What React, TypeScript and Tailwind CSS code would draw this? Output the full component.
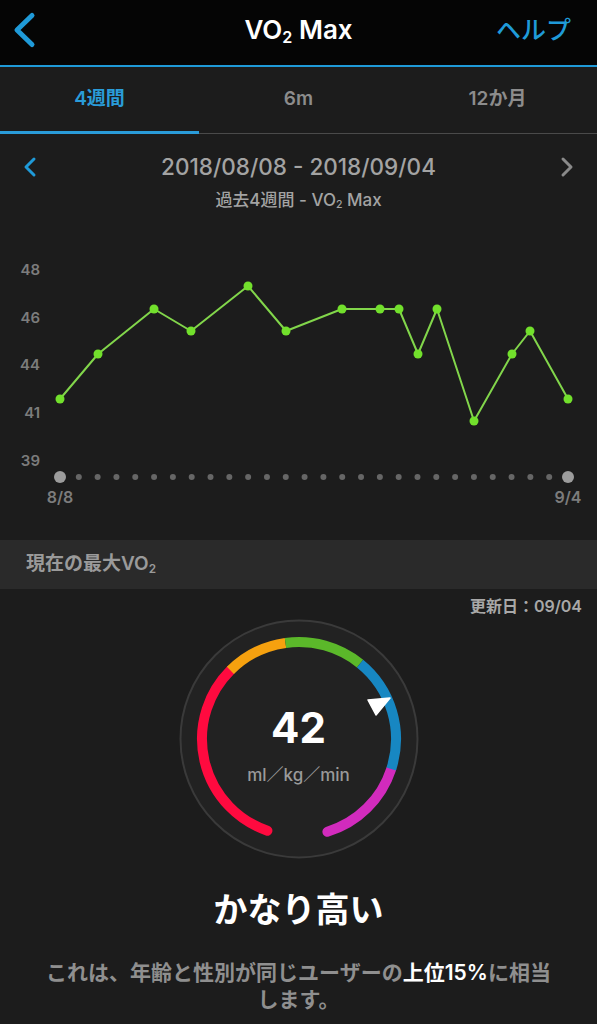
import React from "react";

const BLUE = "#1f9ad8";

const points: [number, number][] = [
  [60, 399], [98, 354], [154, 309], [191, 331], [248, 286], [286, 331],
  [342, 309], [380, 309], [399, 309], [418, 354], [437, 309], [474, 421],
  [512, 354], [530, 331], [568, 399],
];

const yLabels: [string, number][] = [
  ["48", 270], ["46", 318], ["44", 365], ["41", 413], ["39", 461],
];

const Chart = () => {
  const dots = Array.from({ length: 28 }, (_, i) => 60 + (508 / 27) * i);
  return (
    <svg width={597} height={329} viewBox="0 211 597 329" className="block">
      {yLabels.map(([t, y]) => (
        <text key={t} x={40} y={y + 5} textAnchor="end" fill="#7c7c7c" fontSize={15} fontWeight={600}>
          {t}
        </text>
      ))}
      {dots.map((x, i) =>
        i === 0 || i === 27 ? (
          <circle key={i} cx={x} cy={477} r={6} fill="#9c9c9c" />
        ) : (
          <circle key={i} cx={x} cy={477} r={3} fill="#666" />
        )
      )}
      <text x={60} y={503} textAnchor="middle" fill="#7c7c7c" fontSize={16} fontWeight={600}>8/8</text>
      <text x={568} y={503} textAnchor="middle" fill="#7c7c7c" fontSize={16} fontWeight={600}>9/4</text>
      <polyline
        points={points.map((p) => p.join(",")).join(" ")}
        fill="none"
        stroke="#82d64b"
        strokeWidth={2}
        strokeLinejoin="round"
      />
      {points.map(([x, y], i) => (
        <circle key={i} cx={x} cy={y} r={4.5} fill="#72e02c" />
      ))}
    </svg>
  );
};

const pt = (deg: number, r: number) => {
  const a = (deg * Math.PI) / 180;
  return `${(120 + r * Math.sin(a)).toFixed(2)} ${(120 - r * Math.cos(a)).toFixed(2)}`;
};

const arc = (a0: number, a1: number, r = 97) =>
  `M ${pt(a0, r)} A ${r} ${r} 0 ${a1 - a0 > 180 ? 1 : 0} 1 ${pt(a1, r)}`;

const Gauge = () => (
  <div className="relative mx-auto w-[240px] h-[240px]">
    <svg width={240} height={240} viewBox="0 0 240 240" className="absolute inset-0">
      <circle cx={120} cy={120} r={118.5} fill="#222" stroke="#3a3a3a" strokeWidth={2} />
      <path d={arc(199, 315)} stroke="#ff0a3f" strokeWidth={10} fill="none" strokeLinecap="round" />
      <path d={arc(468, 523)} stroke="#d22bbd" strokeWidth={10} fill="none" strokeLinecap="round" />
      <path d={arc(315, 352)} stroke="#f6a10f" strokeWidth={10} fill="none" />
      <path d={arc(352, 399)} stroke="#5bb82a" strokeWidth={10} fill="none" />
      <path d={arc(399, 468)} stroke="#1787c2" strokeWidth={10} fill="none" />
      <polygon points="189,81 211,79 197,96" fill="#fff" strokeLinejoin="round" stroke="#fff" strokeWidth={1.5} />
    </svg>
    <div className="absolute inset-0 flex flex-col items-center">
      <div className="mt-[86px] h-[46px] leading-[46px] text-[42px] font-bold text-white">42</div>
      <div className="mt-[12px] text-[17px] leading-[24px] font-medium text-[#9a9a9a]">ml／kg／min</div>
    </div>
  </div>
);

const Sub2 = () => <span className="text-[0.62em] leading-none align-[-0.22em]">2</span>;

export default function App() {
  return (
    <div className="w-[597px] h-[1024px] overflow-hidden bg-[#1c1c1c] font-['Inter','Noto_Sans_CJK_JP',sans-serif]">
      <header className="h-[65px] bg-[#050505] flex items-center justify-between pb-[6px] pl-[10px] pr-[26px] relative">
        <svg width={30} height={40} viewBox="0 0 30 40">
          <path d="M22 5.5 L7 20 L22 34.5" stroke={BLUE} strokeWidth={5} fill="none" strokeLinecap="round" strokeLinejoin="round" />
        </svg>
        <h1 className="absolute left-0 right-0 top-[14px] h-[32px] text-center text-[26px] leading-[32px] font-semibold text-white pointer-events-none">
          VO<Sub2 /> Max
        </h1>
        <span className="text-[25px] leading-[32px] font-medium text-[#1f9ad8]">ヘルプ</span>
      </header>
      <div className="h-[2px] bg-[#1f9ad8]" />

      <nav className="h-[67px] flex flex-col">
        <div className="flex-1 grid grid-cols-3 items-center text-center text-[19px] font-semibold">
          <span className="text-[#2a9cd9]">4週間</span>
          <span className="text-[#8c8c8c]">6m</span>
          <span className="text-[#8c8c8c]">12か月</span>
        </div>
        <div className="flex items-end h-[3px]">
          <div className="w-[199px] h-[3px] bg-[#2a9cd9]" />
          <div className="flex-1 h-[1px] bg-[#4a4a4a]" />
        </div>
      </nav>

      <section className="h-[77px] pt-[19px] flex flex-col items-center">
        <div className="w-full flex items-center justify-between px-[22px] h-[28px]">
          <svg width={16} height={22} viewBox="0 0 16 22">
            <path d="M12 3 L4 11 L12 19" stroke={BLUE} strokeWidth={3} fill="none" strokeLinecap="round" strokeLinejoin="round" />
          </svg>
          <span className="text-[22.5px] leading-[28px] font-medium text-[#a3a3a3]">2018/08/08 - 2018/09/04</span>
          <svg width={16} height={22} viewBox="0 0 16 22">
            <path d="M4 3 L12 11 L4 19" stroke="#8a8a8a" strokeWidth={3} fill="none" strokeLinecap="round" strokeLinejoin="round" />
          </svg>
        </div>
        <div className="mt-[8px] h-[22px] text-[17px] leading-[22px] font-medium text-[#a3a3a3]">
          過去4週間 - VO<Sub2 /> Max
        </div>
      </section>

      <Chart />

      <div className="h-[49px] bg-[#2a2a2a] flex items-center px-[26px] text-[19px] font-semibold text-[#9a9a9a]">
        <span>
          現在の最大VO<Sub2 />
        </span>
      </div>

      <div className="pt-[7px] pr-[15px] text-right text-[16px] leading-[20px] font-semibold text-[#a8a8a8]">
        更新日：09/04
      </div>

      <div className="mt-[3px]">
        <Gauge />
      </div>

      <div className="mt-[31px] text-center text-[34px] leading-[40px] font-bold text-white">かなり高い</div>

      <p className="mt-[29px] text-center text-[21px] leading-[27px] font-semibold text-[#8f8f8f]">
        これは、年齢と性別が同じユーザーの<span className="text-white">上位15%</span>に相当
        <br />
        します。
      </p>
    </div>
  );
}
